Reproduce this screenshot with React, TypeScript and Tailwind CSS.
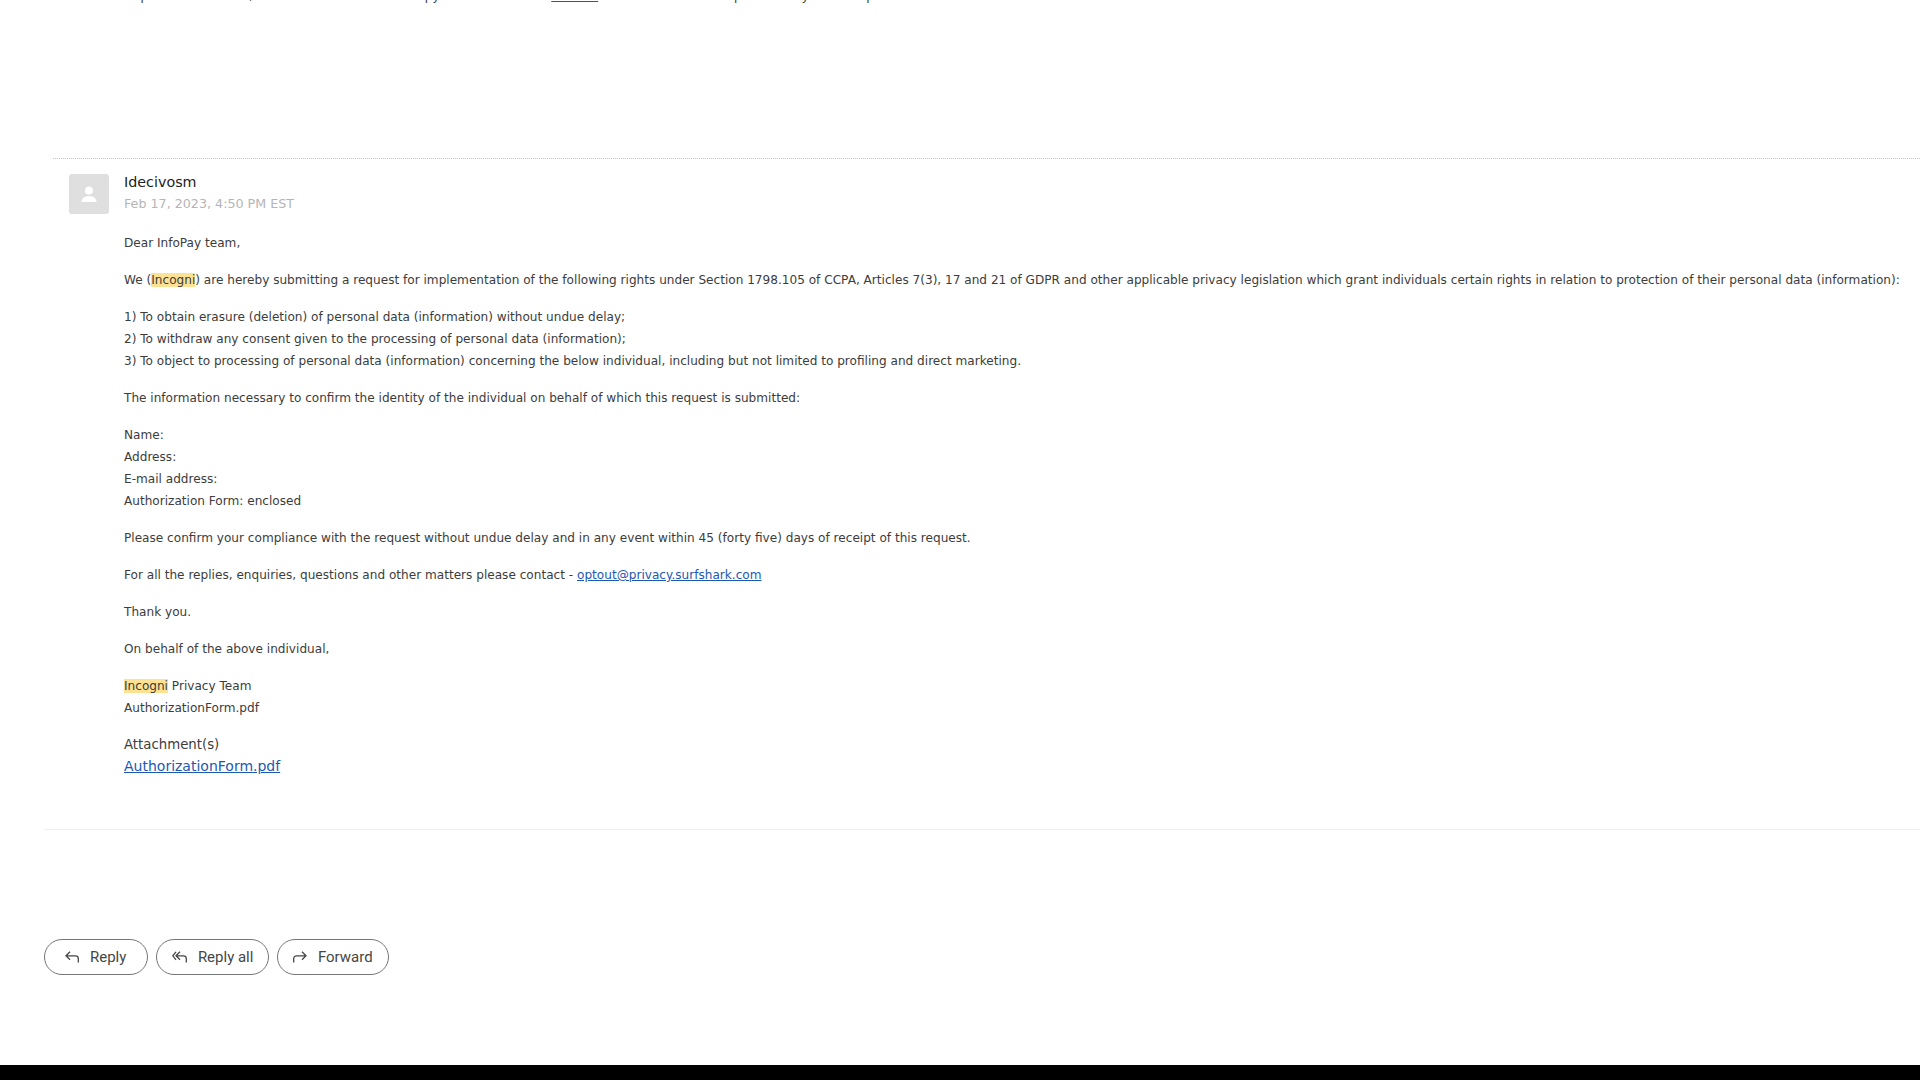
const PARAGRAPHS: string[][] = [
  ['1) To obtain erasure (deletion) of personal data (information) without undue delay;', '2) To withdraw any consent given to the processing of personal data (information);', '3) To object to processing of personal data (information) concerning the below individual, including but not limited to profiling and direct marketing.'],
  ['The information necessary to confirm the identity of the individual on behalf of which this request is submitted:'],
  ['Name:', 'Address:', 'E-mail address:', 'Authorization Form: enclosed'],
  ['Please confirm your compliance with the request without undue delay and in any event within 45 (forty five) days of receipt of this request.'],
];

function Mark({ children }: { children: string }) {
  return <span className="bg-[#fde293]">{children}</span>;
}

function ActionButton({ label, icon, wide }: { label: string; icon: React.ReactNode; wide?: boolean }) {
  return (
    <button className={`flex h-[36px] items-center gap-[11px] rounded-full border border-[#747775] font-['Roboto',sans-serif] text-[15px] text-[#444746] ${wide ? 'pl-[20px] pr-[21px]' : 'px-[15px]'}`}>
      {icon}
      {label}
    </button>
  );
}

export default function App() {
  return (
    <div className="flex h-[1080px] w-[1920px] flex-col overflow-hidden bg-white font-['DejaVu_Sans',sans-serif] text-[12.1px] leading-[22px] text-[#3c3c3c]">
      <div className="h-[158px] shrink-0 pl-[124px]">
        <div className="mt-[-15px] h-[22px] whitespace-nowrap">
          To process the forms, the reviewer needs a full copy of this form at its <a className="text-[#1c58b5] underline">website</a> or then send it to the publisher by email or post.
        </div>
      </div>
      <div className="ml-[53px] border-t border-dotted border-[#c4c4c4] pt-[15px]">
        <div className="flex gap-[15px] pl-[16px]">
          <div className="flex h-[40px] w-[40px] shrink-0 items-center justify-center rounded-[3px] bg-[#dfdfdf]">
            <svg width="20" height="20" viewBox="0 0 20 20" fill="#fff">
              <circle cx="10" cy="6.500" r="4" />
              <path d="M2.500 18c0-3.800 3.400-6 7.500-6s7.500 2.200 7.500 6z" />
            </svg>
          </div>
          <div className="mt-[-3px] min-w-0">
            <div className="text-[14.300px] text-[#222]">Idecivosm</div>
            <div className="text-[12.700px] text-[#b5b5b5]">Feb 17, 2023, 4:50 PM EST</div>
          </div>
        </div>
      </div>
      <div className="ml-[124px] mt-[17px] flex flex-col gap-[15px] whitespace-nowrap">
        <div>Dear InfoPay team,</div>
        <div>
          We (<Mark>Incogni</Mark>) are hereby submitting a request for implementation of the following rights under Section 1798.105 of CCPA, Articles 7(3), 17 and 21 of GDPR and other applicable privacy legislation which grant individuals certain rights in relation to protection of their personal data (information):
        </div>
        {PARAGRAPHS.map((lines) => (
          <div key={lines[0]}>
            {lines.map((line) => (
              <div key={line}>{line}</div>
            ))}
          </div>
        ))}
        <div>
          For all the replies, enquiries, questions and other matters please contact - <a className="text-[#1c58b5] underline">optout@privacy.surfshark.com</a>
        </div>
        <div>Thank you.</div>
        <div>On behalf of the above individual,</div>
        <div>
          <div><Mark>Incogni</Mark> Privacy Team</div>
          <div>AuthorizationForm.pdf</div>
        </div>
      </div>
      <div className="ml-[124px] mt-[15px] text-[14px]">
        <div className="text-[13.300px]">Attachment(s)</div>
        <a className="block leading-[21px] text-[#1c58b5] underline">AuthorizationForm.pdf</a>
      </div>
      <div className="ml-[44px] mt-[52px] border-t border-[#efefef]" />
      <div className="ml-[44px] mt-[109px] flex gap-[7.5px]">
        <ActionButton wide label="Reply" icon={<svg width="14" height="12" viewBox="0 0 14 12" fill="none" stroke="#444746" strokeWidth="1.300"><path d="M5 .8 1 4.800l4 4M1 4.800h9.500c1.600 0 2.800 1.200 2.800 2.800V11.500" /></svg>} />
        <ActionButton label="Reply all" icon={<svg width="15" height="12" viewBox="0 0 15 12" fill="none" stroke="#444746" strokeWidth="1.300"><path d="M4 .8 .8 4.800 4 8.800M8 .8 4 4.800l4 4M4 4.800h7.500c1.600 0 2.800 1.200 2.800 2.800V11.500" /></svg>} />
        <ActionButton label="Forward" icon={<svg width="14" height="12" viewBox="0 0 14 12" fill="none" stroke="#444746" strokeWidth="1.300"><path d="M9 .8l4 4-4 4M13 4.800H3.500C1.900 4.800.7 6 .7 7.600V11.500" /></svg>} />
      </div>
      <div className="mt-auto h-[15px] bg-black" />
    </div>
  );
}
